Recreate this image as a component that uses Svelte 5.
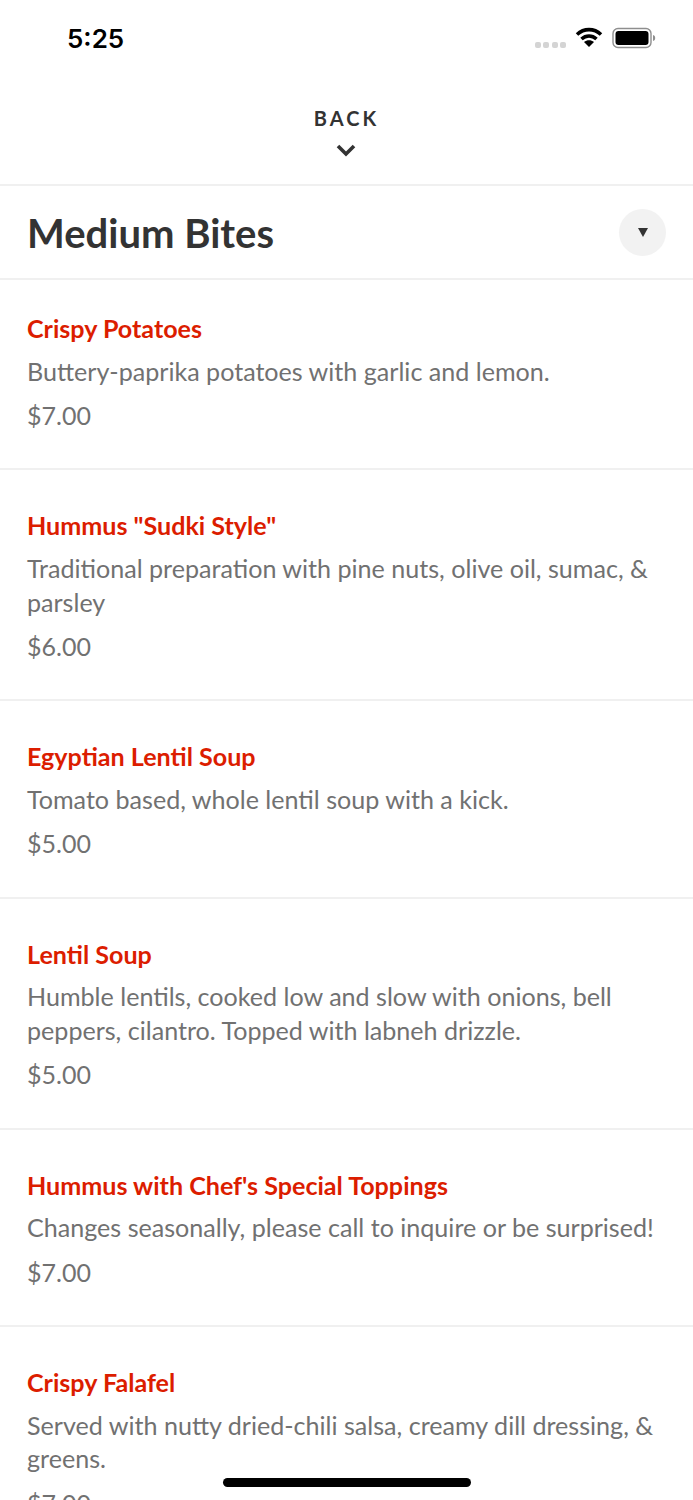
<script>
	const items = [
		{ name: 'Crispy Potatoes', desc: 'Buttery-paprika potatoes with garlic and lemon.', price: '$7.00' },
		{ name: 'Hummus "Sudki Style"', desc: 'Traditional preparation with pine nuts, olive oil, sumac, & parsley', price: '$6.00' },
		{ name: 'Egyptian Lentil Soup', desc: 'Tomato based, whole lentil soup with a kick.', price: '$5.00' },
		{ name: 'Lentil Soup', desc: 'Humble lentils, cooked low and slow with onions, bell peppers, cilantro. Topped with labneh drizzle.', price: '$5.00' },
		{ name: "Hummus with Chef's Special Toppings", desc: 'Changes seasonally, please call to inquire or be surprised!', price: '$7.00' },
		{ name: 'Crispy Falafel', desc: 'Served with nutty dried-chili salsa, creamy dill dressing, & greens.', price: '$7.00' }
	];
</script>

<div class="screen">
	<div class="status">
		<span class="time">5:25</span>
		<div class="status-icons">
			<div class="signal"><i></i><i></i><i></i><i></i></div>
			<svg class="wifi" width="28" height="22" viewBox="0 0 28 22">
				<path d="M2 8.500C9 2 19 2 26 8.500M6.500 13C11 9 17 9 21.500 13" fill="none" stroke="#000" stroke-width="3.600" />
				<path d="M14 21l-5-5c3-2.400 7-2.400 10 0z" fill="#000" />
			</svg>
			<svg class="battery" width="44" height="22" viewBox="0 0 44 22">
				<rect x="1" y="1.500" width="38" height="19" rx="5" fill="none" stroke="#8e8e8e" stroke-width="1.400" />
				<rect x="3.500" y="4" width="33" height="14" rx="3" fill="#000" />
				<path d="M41 8c1.600.4 2.200 1.500 2.200 3s-.6 2.600-2.200 3z" fill="#8e8e8e" />
			</svg>
		</div>
	</div>

	<div class="back">
		<span>BACK</span>
		<svg width="22" height="14" viewBox="0 0 22 14">
			<path d="M3 3l8 8 8-8" fill="none" stroke="#333" stroke-width="3.600" />
		</svg>
	</div>

	<div class="section-head">
		<h1>Medium Bites</h1>
		<div class="toggle"><span class="caret"></span></div>
	</div>

	<div class="list">
		{#each items as item}
			<div class="item">
				<div class="name">{item.name}</div>
				<div class="desc">{item.desc}</div>
				<div class="price">{item.price}</div>
			</div>
		{/each}
	</div>

	<div class="home-bar"></div>
</div>

<style>
	:global(body) {
		background: #fff;
	}

	.screen {
		position: relative;
		width: 693px;
		height: 1500px;
		overflow: hidden;
		background: #fff;
		font-family: Lato, sans-serif;
	}

	.status {
		display: flex;
		align-items: center;
		justify-content: space-between;
		height: 76px;
		padding: 0 37px 0 67px;
		box-sizing: border-box;
	}

	.time {
		font-family: Inter, sans-serif;
		font-weight: 600;
		font-size: 26px;
		color: #000;
	}

	.status-icons {
		display: flex;
		align-items: center;
	}

	.signal {
		display: flex;
		gap: 2.500px;
		margin: 13px 9px 0 0;
	}

	.signal i {
		width: 6px;
		height: 6px;
		border-radius: 2px;
		background: #d4d4d4;
	}

	.wifi {
		margin-right: 9px;
		margin-top: -2px;
	}

	.back {
		display: flex;
		flex-direction: column;
		align-items: center;
		height: 110px;
		padding-top: 30px;
		box-sizing: border-box;
		border-bottom: 2px solid #f0f0f0;
	}

	.back span {
		font-size: 20px;
		line-height: 24px;
		font-weight: 700;
		letter-spacing: 3px;
		color: #333;
	}

	.back svg {
		margin: 13px 2px 0 0;
	}

	.section-head {
		display: flex;
		align-items: center;
		justify-content: space-between;
		height: 94px;
		padding: 0 27px;
		box-sizing: border-box;
		border-bottom: 2px solid #f0f0f0;
	}

	h1 {
		margin: 2px 0 0;
		font-size: 40px;
		font-weight: 700;
		color: #333;
	}

	.toggle {
		display: flex;
		align-items: center;
		justify-content: center;
		width: 47px;
		height: 47px;
		border-radius: 50%;
		background: #f2f2f2;
	}

	.caret {
		width: 0;
		height: 0;
		border-left: 5.500px solid transparent;
		border-right: 5.500px solid transparent;
		border-top: 9px solid #333;
	}

	.item {
		padding: 38px 27px 36.400px;
		border-bottom: 2px solid #f0f0f0;
	}

	.item:first-child {
		padding-top: 31px;
	}

	.name {
		font-size: 25.100px;
		line-height: 34px;
		font-weight: 700;
		color: #dc1d00;
	}

	.desc {
		margin-top: 9.600px;
		font-size: 25.100px;
		line-height: 33.600px;
		color: #717171;
	}

	.price {
		margin-top: 9.800px;
		font-size: 25px;
		line-height: 34px;
		color: #717171;
	}

	.home-bar {
		position: absolute;
		left: 223px;
		bottom: 13px;
		width: 248px;
		height: 9px;
		border-radius: 5px;
		background: #000;
	}
</style>
